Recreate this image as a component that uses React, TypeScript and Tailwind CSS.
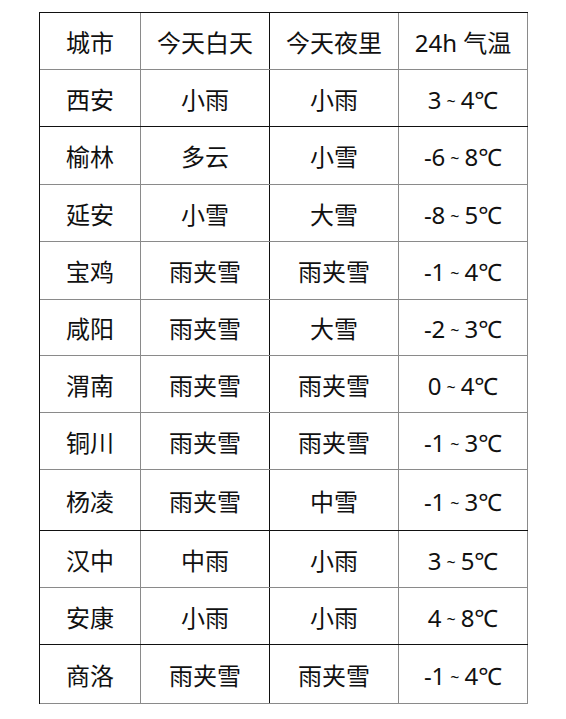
import React from "react";

const rows: string[][] = [
  ["城市", "今天白天", "今天夜里", "24h 气温"],
  ["西安", "小雨", "小雨", "3~4℃"],
  ["榆林", "多云", "小雪", "-6~8℃"],
  ["延安", "小雪", "大雪", "-8~5℃"],
  ["宝鸡", "雨夹雪", "雨夹雪", "-1~4℃"],
  ["咸阳", "雨夹雪", "大雪", "-2~3℃"],
  ["渭南", "雨夹雪", "雨夹雪", "0~4℃"],
  ["铜川", "雨夹雪", "雨夹雪", "-1~3℃"],
  ["杨凌", "雨夹雪", "中雪", "-1~3℃"],
  ["汉中", "中雨", "小雨", "3~5℃"],
  ["安康", "小雨", "小雨", "4~8℃"],
  ["商洛", "雨夹雪", "雨夹雪", "-1~4℃"],
];

const heights = [
  "h-[57px]", "h-[57px]", "h-[58px]", "h-[57px]", "h-[58px]", "h-[56px]",
  "h-[57px]", "h-[57px]", "h-[61px]", "h-[57px]", "h-[57px]", "h-[59px]",
];
const lineColors = [
  "border-[#8a8a8a]", "border-[#111]", "border-[#8a8a8a]", "border-[#8a8a8a]",
  "border-[#8a8a8a]", "border-[#8a8a8a]", "border-[#8a8a8a]", "border-[#8a8a8a]",
  "border-[#111]", "border-[#8a8a8a]", "border-[#111]", "border-[#8a8a8a]",
];
const colBorders = [
  "border-[#8a8a8a]", "border-[#111]", "border-[#8a8a8a]", "border-[#8a8a8a]",
];

function Temp({ v }: { v: string }) {
  const [a, b] = v.split("~");
  return (
    <span className="flex items-center">
      <span>{a}</span>
      <span className="mx-[5px] text-[16px] relative top-[1px]">~</span>
      <span>{b}</span>
    </span>
  );
}

export default function App() {
  return (
    <div
      className="min-h-[719px] w-[566px] bg-white pt-[12px] pl-[39px]"
      style={{ fontFamily: '"Noto Sans", "Noto Sans CJK SC", sans-serif' }}
    >
      <div className="w-[489px] border-l border-t border-[#111]">
        {rows.map((r, i) => (
          <div
            key={i}
            className={`grid grid-cols-[101px_129px_129px_129px] border-b ${heights[i]} ${lineColors[i]}`}
          >
            {r.map((c, j) => (
              <div
                key={j}
                className={`flex items-center justify-center border-r pt-[3px] text-[24px] text-[#111] ${colBorders[j]}`}
              >
                {i > 0 && j === 3 ? <Temp v={c} /> : c}
              </div>
            ))}
          </div>
        ))}
      </div>
    </div>
  );
}
